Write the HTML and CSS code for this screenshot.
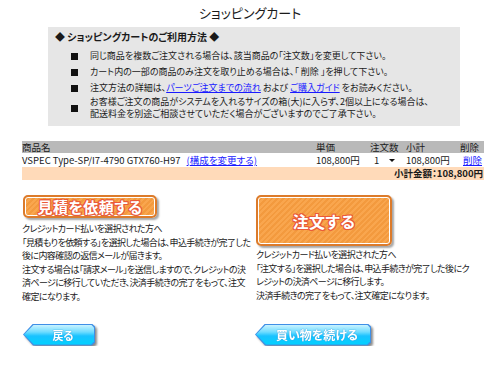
FILE: index.html
```html
<!DOCTYPE html>
<html lang="ja">
<head>
<meta charset="utf-8">
<title>ショッピングカート</title>
<link rel="stylesheet" href="styles.css">
</head>
<body>
<div class="page">
  <h1 class="title">ショッピングカート</h1>

  <div class="guide">
    <div class="guide-head">◆ ショッピングカートのご利用方法 ◆</div>
    <ul class="guide-list">
      <li><span class="sq"></span><span>同じ商品を複数ご注文される場合は、該当商品の「注文数」を変更して下さい。</span></li>
      <li><span class="sq"></span><span>カート内の一部の商品のみ注文を取り止める場合は、「 削除 」を押して下さい。</span></li>
      <li><span class="sq"></span><span>注文方法の詳細は、<a href="#" class="lnk">パーツご注文までの流れ</a> および <a href="#" class="lnk">ご購入ガイド</a> をお読みください。</span></li>
      <li class="two"><span class="sq"></span><span>お客様ご注文の商品がシステムを入れるサイズの箱(大)に入らず、2個以上になる場合は、<br>配送料金を別途ご相談させていただく場合がございますのでご了承下さい。</span></li>
    </ul>
  </div>

  <table class="cart">
    <colgroup>
      <col class="c-name"><col class="c-price"><col class="c-qty"><col class="c-sub"><col class="c-del">
    </colgroup>
    <tr class="head">
      <th>商品名</th><th>単価</th><th>注文数</th><th>小計</th><th>削除</th>
    </tr>
    <tr class="item">
      <td>VSPEC Type-SP/I7-4790 GTX760-H97 <a href="#" class="lnk change">(構成を変更する)</a></td>
      <td>108,800円</td>
      <td><span class="qty">1<span class="caret"></span></span></td>
      <td>108,800円</td>
      <td class="del"><a href="#" class="lnk">削除</a></td>
    </tr>
    <tr class="total">
      <td colspan="5">小計金額：108,800円</td>
    </tr>
  </table>

  <div class="actions">
    <div class="col col-left">
      <a href="#" class="obtn obtn-small">見積を依頼する</a>
      <p class="note">クレジットカード払いを選択された方へ<br>「見積もりを依頼する」を選択した場合は、申込手続きが完了した<br>後に内容確認の返信メールが届きます。<br>注文する場合は「請求メール」を送信しますので、クレジットの決<br>済ページに移行していただき、決済手続きの完了をもって、注文<br>確定になります。</p>
    </div>
    <div class="col col-right">
      <a href="#" class="obtn obtn-big">注文する</a>
      <p class="note">クレジットカード払いを選択された方へ<br>「注文する」を選択した場合は、申込手続きが完了した後にク<br>レジットの決済ページに移行します。<br>決済手続きの完了をもって、注文確定になります。</p>
    </div>
  </div>

  <div class="nav">
    <div class="nav-col nav-left">
      <a href="#" class="bbtn bbtn-back"><span class="bbtn-edge"><span class="bbtn-fill">戻る</span></span></a>
    </div>
    <div class="nav-col">
      <a href="#" class="bbtn bbtn-cont"><span class="bbtn-edge"><span class="bbtn-fill">買い物を続ける</span></span></a>
    </div>
  </div>
</div>
</body>
</html>
```

FILE: styles.css
```css
html, body {
  margin: 0;
  padding: 0;
  background: #ffffff;
}
body {
  font-family: "Noto Sans CJK JP", "Noto Sans", sans-serif;
  color: #1a1a1a;
  font-feature-settings: "palt";
}
.page {
  width: 500px;
}
.title {
  margin: 0;
  padding-top: 5px;
  font-size: 13px;
  line-height: 16px;
  font-weight: normal;
  text-align: center;
}
.guide {
  margin: 6px 0 0 48px;
  width: 412px;
  box-sizing: border-box;
  background: #e6e6e6;
  padding: 4px 0 6px 7px;
}
.guide-head {
  font-size: 10px;
  line-height: 12px;
  font-weight: bold;
}
.guide-list {
  list-style: none;
  margin: 5px 0 0;
  padding: 0 0 0 16px;
  font-size: 9px;
  line-height: 10px;
  white-space: nowrap;
}
.guide-list li {
  display: flex;
  align-items: center;
  min-height: 16px;
}
.guide-list li.two {
  line-height: 12px;
}
.sq {
  flex: none;
  width: 7px;
  height: 7px;
  background: #111;
  margin-right: 12px;
}
.lnk {
  color: #1a1aff;
  text-decoration: underline;
}
.cart {
  margin: 15px 0 0 22px;
  width: 462px;
  border-collapse: collapse;
  font-size: 9.5px;
  line-height: 11px;
  table-layout: fixed;
}
.c-name { width: 294px; }
.c-price { width: 54px; }
.c-qty { width: 36px; }
.c-sub { width: 54px; }
.c-del { width: 24px; }
.cart th, .cart td {
  padding: 0;
  text-align: left;
  white-space: nowrap;
  vertical-align: middle;
}
.cart .head th {
  background: #b9b9b9;
  font-weight: normal;
  height: 12px;
}
.cart .item td {
  height: 13px;
  padding-top: 1px;
}
.cart .change {
  margin-left: 4px;
}
.qty {
  display: inline-flex;
  align-items: center;
  justify-content: space-between;
  box-sizing: border-box;
  width: 27px;
  height: 12px;
  padding: 0 3px 0 3px;
  margin-left: 1px;
  background: #fff;
}
.caret {
  width: 0;
  height: 0;
  border-left: 3px solid transparent;
  border-right: 3px solid transparent;
  border-top: 3px solid #111;
}
.cart td.del {
  padding-left: 3px;
}
.cart .total td {
  background: #ffdab9;
  text-align: right;
  font-weight: bold;
  height: 13px;
  padding-right: 1px;
}
.actions {
  display: flex;
  margin-top: 15px;
}
.col-left {
  width: 234px;
  padding-left: 22px;
}
.obtn {
  display: flex;
  align-items: center;
  justify-content: center;
  box-sizing: border-box;
  border: 2px solid #dc7b2b;
  border-radius: 5px;
  box-shadow: inset 0 0 0 1px #ffffff, 2px 2px 2px rgba(0, 0, 0, 0.35);
  background: repeating-linear-gradient(135deg, #f9a64e 0 2px, #f39a3e 2px 4px);
  color: #fff;
  font-weight: bold;
  text-decoration: none;
  text-shadow: 1px 0 #ea5a3a, -1px 0 #ea5a3a, 0 1px #ea5a3a, 0 -1px #ea5a3a,
    1px 1px #ea5a3a, -1px -1px #ea5a3a, 1px -1px #ea5a3a, -1px 1px #ea5a3a;
  letter-spacing: 0.5px;
}
.obtn-small {
  width: 134px;
  height: 23px;
  margin-left: 1px;
  font-size: 15px;
}
.obtn-big {
  width: 136px;
  height: 51px;
  font-size: 16px;
}
.note {
  margin: 4px 0 0;
  font-size: 9px;
  line-height: 13.6px;
  letter-spacing: -0.6px;
  white-space: nowrap;
}
.col-right .note {
  margin-top: 2px;
}
.nav {
  display: flex;
  margin-top: 17px;
}
.nav-left {
  width: 232px;
  padding-left: 23px;
}
.bbtn {
  display: inline-block;
  text-decoration: none;
  filter: drop-shadow(2px 2px 1px rgba(0, 0, 0, 0.45));
}
.bbtn-edge, .bbtn-fill {
  display: block;
  clip-path: polygon(0 50%, 10px 0, calc(100% - 3px) 0, 100% 3px, 100% calc(100% - 3px), calc(100% - 3px) 100%, 10px 100%);
}
.bbtn-edge {
  background: #3f8fe6;
  padding: 1px;
}
.bbtn-fill {
  height: 20px;
  line-height: 20px;
  background: linear-gradient(#c9f3ff 0%, #6fdcff 35%, #19c2ff 55%, #00d2ff 100%);
  color: #fff;
  font-weight: bold;
  text-align: center;
  text-shadow: 0 0 1px #3a9fd8, 0 0 1px #3a9fd8;
  box-sizing: border-box;
  padding-left: 8px;
}
.bbtn-back .bbtn-fill {
  width: 70px;
  font-size: 11px;
}
.bbtn-cont .bbtn-fill {
  width: 114px;
  font-size: 12px;
}
```
